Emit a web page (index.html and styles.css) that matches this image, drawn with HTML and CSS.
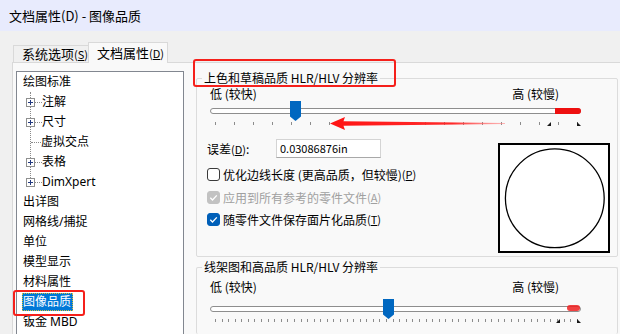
FILE: index.html
```html
<!DOCTYPE html>
<html>
<head>
<meta charset="utf-8">
<link rel="stylesheet" href="styles.css">
</head>
<body>
<div class="win">
  <div class="titlebar">文档属性(D) - 图像品质</div>
  <div class="tabs">
    <div class="tab tab1">系统选项<span class="mn">(<u>S</u>)</span></div>
    <div class="tab tab2">文档属性<span class="mn">(<u>D</u>)</span></div>
  </div>
  <div class="panel">
    <div class="tree">
      <div class="row root">绘图标准</div>
      <div class="children">
        <div class="row child"><svg class="exp" width="9" height="9"><rect x="0.5" y="0.5" width="8" height="8" fill="#fff" stroke="#8e8f8f"/><path d="M2 4.5h5M4.5 2v5" stroke="#22397f"/></svg><span class="hdot"></span>注解</div>
        <div class="row child"><svg class="exp" width="9" height="9"><rect x="0.5" y="0.5" width="8" height="8" fill="#fff" stroke="#8e8f8f"/><path d="M2 4.5h5M4.5 2v5" stroke="#22397f"/></svg><span class="hdot"></span>尺寸</div>
        <div class="row child"><span class="hdot long"></span>虚拟交点</div>
        <div class="row child"><svg class="exp" width="9" height="9"><rect x="0.5" y="0.5" width="8" height="8" fill="#fff" stroke="#8e8f8f"/><path d="M2 4.5h5M4.5 2v5" stroke="#22397f"/></svg><span class="hdot"></span>表格</div>
        <div class="row child"><svg class="exp" width="9" height="9"><rect x="0.5" y="0.5" width="8" height="8" fill="#fff" stroke="#8e8f8f"/><path d="M2 4.5h5M4.5 2v5" stroke="#22397f"/></svg><span class="hdot"></span>DimXpert</div>
      </div>
      <div class="row root">出详图</div>
      <div class="row root">网格线/捕捉</div>
      <div class="row root">单位</div>
      <div class="row root">模型显示</div>
      <div class="row root">材料属性</div>
      <div class="row root"><span class="sel">图像品质<span class="annot annot-sel"></span></span></div>
      <div class="row root">钣金 MBD</div>
    </div>

    <div class="right">
      <div class="group g1">
        <div class="gtitle">上色和草稿品质 HLR/HLV 分辨率<span class="annot annot-title"></span></div>
        <div class="scale"><span>低 (较快)</span><span>高 (较慢)</span></div>
        <div class="slider">
          <div class="track"><span class="track-red"></span></div>
          <div class="thumb" style="left:80px"></div>
          <div class="ticks"><i></i><i></i><i></i><i></i><i></i><i></i><i></i><i></i><i></i><i></i><i></i><i></i><i></i><i></i><i></i><i></i><i></i><i></i><i></i><i></i></div>
          <span class="mark" style="left:337px"></span>
          <span class="mark mark-end" style="left:367px"></span>
          <svg class="arrow" width="175" height="13" viewBox="0 0 175 13">
            <defs>
              <linearGradient id="ag" x1="0" y1="0" x2="1" y2="0">
                <stop offset="0" stop-color="#ff1414"/>
                <stop offset="0.7" stop-color="#ff2a2a"/>
                <stop offset="1" stop-color="#ff8a8a" stop-opacity="0.6"/>
              </linearGradient>
            </defs>
            <polygon points="0,6.5 15,0 13.5,4.3 175,6 175,7 13.5,8.7 15,13" fill="url(#ag)"/>
          </svg>
        </div>
        <div class="g1body">
          <div class="opts">
            <div class="err"><span class="errlbl">误差<span class="mn">(<u>D</u>)</span>:</span><div class="input">0.03086876in</div></div>
            <div class="cb cb1"><span class="box"></span>优化边线长度 (更高品质，但较慢)<span class="mn">(<u>P</u>)</span></div>
            <div class="cb cb2 disabled"><span class="box checked dis"><svg width="13" height="13" viewBox="0 0 13 13"><path d="M3.3 6.8l2.2 2.2 4.3-4.6" fill="none" stroke="#fff" stroke-width="1.3"/></svg></span>应用到所有参考的零件文件<span class="mn">(<u>A</u>)</span></div>
            <div class="cb cb3"><span class="box checked"><svg width="13" height="13" viewBox="0 0 13 13"><path d="M3.3 6.8l2.2 2.2 4.3-4.6" fill="none" stroke="#fff" stroke-width="1.3"/></svg></span>随零件文件保存面片化品质<span class="mn">(<u>T</u>)</span></div>
          </div>
          <div class="preview">
            <svg width="108" height="106" viewBox="0 0 108 106">
              <circle cx="54.8" cy="53.3" r="49.4" fill="none" stroke="#000" stroke-width="1.3"/>
            </svg>
          </div>
        </div>
      </div>

      <div class="group g2">
        <div class="gtitle">线架图和高品质 HLR/HLV 分辨率</div>
        <div class="scale"><span>低 (较快)</span><span>高 (较慢)</span></div>
        <div class="slider">
          <div class="track"></div>
          <div class="thumb" style="left:173px"></div>
          <div class="ticks dense"><i></i><i></i><i></i><i></i><i></i><i></i><i></i><i></i><i></i><i></i><i></i><i></i><i></i><i></i><i></i><i></i><i></i><i></i><i></i><i></i><i></i><i></i><i></i><i></i><i></i><i></i><i></i><i></i><i></i><i></i><i></i><i></i><i></i><i></i><i></i><i></i><i></i><i></i><i></i><i></i><i></i><i></i><i></i><i></i><i></i><i></i><i></i><i></i><i></i><i></i><i></i><i></i><i></i><i></i><i></i><i></i></div>
          <span class="mark" style="left:346px"></span>
          <span class="mark mark-end" style="left:367px"></span>
          <span class="redspot"></span>
        </div>
      </div>
    </div>
  </div>
</div>
</body>
</html>
```

FILE: styles.css
```css
* { box-sizing: border-box; }
html, body { margin: 0; padding: 0; }
body {
  width: 620px;
  height: 334px;
  overflow: hidden;
  background: #f0f0f0;
  font-family: "Noto Sans CJK SC", sans-serif;
  font-size: 12px;
  color: #000;
}
.win { display: flex; flex-direction: column; height: 334px; overflow: hidden; }

.titlebar {
  flex: none;
  height: 31px;
  background: #e8ebfd;
  padding-left: 9px;
  font-size: 13px;
  line-height: 31px;
}

.tabs {
  flex: none;
  display: flex;
  align-items: flex-end;
  height: 20px;
  margin-top: 11px;
  padding-left: 13px;
}
.tab {
  font-size: 13px;
  border: 1px solid #d9d9d9;
  border-bottom: none;
  white-space: nowrap;
}
.tab1 {
  width: 75px;
  height: 17px;
  line-height: 16px;
  padding-left: 8px;
  border-right: none;
  background: #f0f0f0;
}
.tab2 {
  width: 80px;
  height: 21px;
  line-height: 19px;
  padding-left: 8px;
  background: #f9f9f9;
  margin-bottom: -1px;
  position: relative;
  z-index: 1;
}
.mn { font-size: 11px; }
.mn u { text-underline-offset: 1px; }

.panel {
  flex: 1;
  min-height: 0;
  display: flex;
  align-items: flex-start;
  margin-left: 12px;
  border-top: 1px solid #d9d9d9;
  border-left: 1px solid #d9d9d9;
  background: #f9f9f9;
  padding: 8px 0 0 3px;
}

/* tree */
.tree {
  flex: none;
  width: 168px;
  height: 263px;
  border: 1px solid #828790;
  border-bottom: none;
  background: #fff;
  font-family: "Noto Sans", "Noto Sans CJK SC", sans-serif;
}
.row {
  height: 20px;
  display: flex;
  align-items: center;
  white-space: nowrap;
  line-height: 20px;
}
.root { padding-left: 6px; }
.children { margin-left: 13px; position: relative; }
.children::before {
  content: "";
  position: absolute;
  left: 0; top: 0; bottom: 10px;
  border-left: 1px dotted #8a8a8a;
}
.exp { flex: none; margin-left: -4px; display: block; position: relative; }
.hdot {
  flex: none;
  width: 7px;
  height: 0;
  border-top: 1px dotted #8a8a8a;
}
.hdot.long { width: 10px; margin-left: 1px; }
.sel {
  position: relative;
  display: inline-block;
  margin-left: -1px;
  padding: 0 1px 0 0;
  height: 18px;
  line-height: 16px;
  background: #0078d7;
  color: #fff;
  border: 1px dotted #d8c03a;
}

/* annotation boxes */
.annot {
  position: absolute;
  border: 2px solid #f5201b;
  border-radius: 3px;
  pointer-events: none;
}
.annot-sel { left: -10px; top: -4px; width: 72px; height: 26px; }
.annot-title { left: -9px; top: -11px; width: 203px; height: 28px; }

/* right */
.right {
  flex: none;
  width: 422px;
  margin-left: 12px;
  margin-top: 7px;
}
.group {
  position: relative;
  border: 1px solid #dcdcdc;
  border-radius: 2px;
}
.g1 { padding-bottom: 3px; }
.g2 { margin-top: 10px; height: 67px; border-bottom: none; }
.gtitle {
  position: relative;
  display: block;
  width: max-content;
  margin-left: 5px;
  margin-top: -9px;
  padding: 0 2px;
  line-height: 16px;
  background: #f9f9f9;
  white-space: nowrap;
}
.scale {
  display: flex;
  justify-content: space-between;
  padding: 0 58px 0 13px;
  line-height: 15px;
}
.g2 .scale { margin-top: 4px; line-height: 16px; }

.slider {
  position: relative;
  margin-left: 13px;
  width: 371px;
  padding-top: 7px;
}
.g2 .slider { margin-top: 4px; }
.track {
  position: relative;
  height: 6px;
  border: 1px solid #8e8e8e;
  border-radius: 3px;
  background: #fff;
}
.track-red {
  position: absolute;
  right: -1px; top: -1px; bottom: -1px;
  width: 26px;
  background: #ee1010;
  border-radius: 0 3px 3px 0;
}
.thumb {
  position: absolute;
  top: 0;
  width: 11px;
  height: 20px;
  background: #0067c0;
  clip-path: polygon(0 0, 100% 0, 100% 78%, 50% 100%, 0 78%);
}
.ticks {
  display: flex;
  justify-content: space-between;
  height: 4px;
  margin-top: 8px;
  padding: 0 3px 0 5px;
}
.g2 .ticks { margin-top: 7px; }
.ticks i { display: block; width: 1px; height: 3px; background: #8c8c8c; }
.mark {
  position: absolute;
  bottom: 0;
  width: 4px;
  height: 4px;
  background: #1a1a1a;
  clip-path: polygon(100% 0, 100% 100%, 0 100%);
}
.mark-end { clip-path: polygon(0 0, 100% 100%, 0 100%); }
.arrow { position: absolute; left: 120px; top: 16px; }
.redspot {
  position: absolute;
  left: 357px; top: 6px;
  width: 13px; height: 6px;
  background: #ee2020;
  border-radius: 3px;
  opacity: 0.85;
}

.g1body {
  display: flex;
  justify-content: space-between;
  align-items: flex-start;
  margin-top: 13px;
  padding: 0 7px 0 10px;
}
.err { display: flex; align-items: center; height: 19px; }
.errlbl { width: 69px; }
.input {
  width: 105px;
  height: 19px;
  border: 1px solid #d4d4d4;
  border-bottom-color: #a8a8a8;
  background: #fff;
  padding-left: 3px;
  line-height: 17px;
  font-size: 11px;
}
.cb {
  display: flex;
  align-items: center;
  height: 20px;
  white-space: nowrap;
}
.cb1 { margin-top: 6px; }
.cb2 { margin-top: 3px; }
.cb3 { margin-top: 2px; }
.box {
  flex: none;
  width: 13px;
  height: 13px;
  margin-right: 3px;
  border: 1px solid #3a3a3a;
  border-radius: 3px;
  background: #fff;
  position: relative;
}
.box svg { position: absolute; left: -1px; top: -1px; }
.box.checked { background: #005fb8; border-color: #005fb8; }
.box.dis { background: #c2c2c2; border-color: #c2c2c2; }
.disabled { color: #a0a0a0; }

.preview {
  flex: none;
  width: 112px;
  height: 110px;
  margin-top: 4px;
  border: 2px solid #000;
  background: #fff;
}
.preview svg { display: block; }
```
